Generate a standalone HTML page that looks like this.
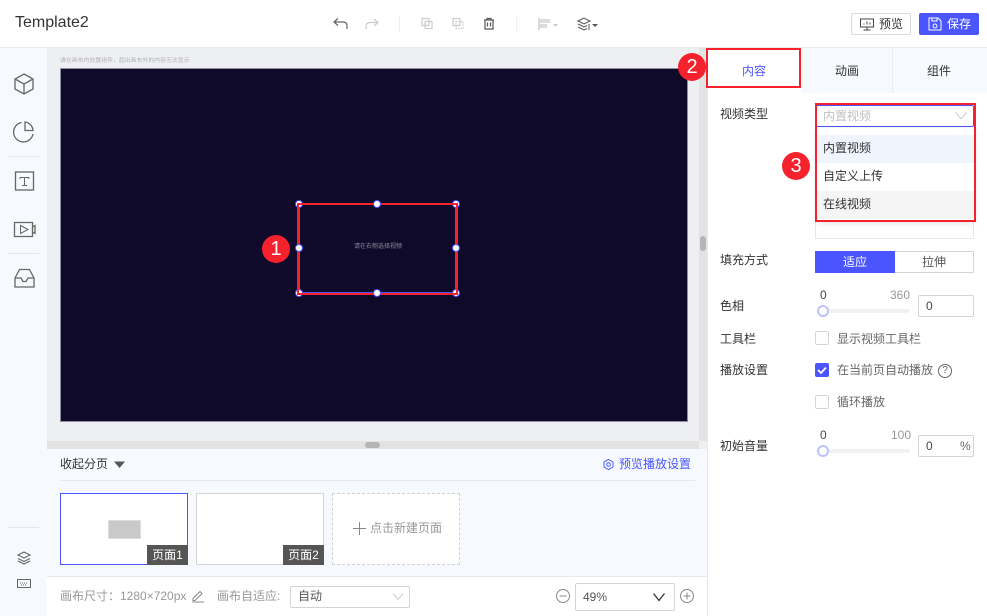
<!DOCTYPE html>
<html lang="zh"><head><meta charset="utf-8"><title>Template2</title>
<style>
*{box-sizing:border-box;margin:0;padding:0}
html,body{width:987px;height:616px;overflow:hidden;background:#fff}
body{position:relative;font-family:"Liberation Sans","Noto Sans CJK SC",sans-serif;font-size:12px;color:#333}
.a{position:absolute}
.t{position:absolute;white-space:nowrap;line-height:16px}
svg{position:absolute;overflow:visible;fill:none}
.h{position:absolute;width:8px;height:8px;border-radius:50%;background:#fff;border:1px solid #4a55ff}
.badge{position:absolute;width:28px;height:28px;border-radius:50%;background:#f5222d;color:#fff;font-size:20px;line-height:28px;text-align:center}
.red{position:absolute;border:2px solid #f5222d}
.cb{position:absolute;width:14px;height:14px;border:1px solid #d4d4d4;border-radius:2px;background:#fff}
.inp{position:absolute;border:1px solid #d4d4d4;border-radius:2px;background:#fff}
.knob{position:absolute;width:12px;height:12px;border-radius:50%;background:#fff;border:2px solid #bcc3fb}
.track{position:absolute;height:4px;background:#f2f2f2;border-radius:2px}
.g{color:#999}
</style></head><body>

<!-- top bar -->
<div class="a" style="left:0;top:47px;width:987px;height:1px;background:#e8e9ed"></div>
<div class="t" style="left:15px;top:13px;font-size:16px;line-height:20px;color:#333">Template2</div>

<svg style="left:0;top:0" width="987" height="47" stroke-width="1.2">
<path d="M338 18.500l-4 3.500 4 3.500M334 22h9c2.500 0 4 1.500 4 4v3" stroke="#666"/>
<path d="M374 19l4 3.500-4 3.500M378 22.500h-8c-2.500 0-4 1.500-4 4v2.500" stroke="#ccc"/>
<path d="M399.500 16v16" stroke="#eee"/>
<rect x="422" y="18.500" width="7" height="7" stroke="#ccc"/><rect x="425" y="21.500" width="7" height="7" stroke="#ccc"/>
<rect x="453" y="18.500" width="7" height="7" stroke="#ccc"/><rect x="456" y="21.500" width="7" height="7" stroke="#ccc" stroke-dasharray="1.500 1"/>
<path d="M484 20h10M487 20v-1.500h4v1.500M485 20v9h8v-9M487.500 22.500v4M490.500 22.500v4" stroke="#555"/>
<path d="M516.500 16v16" stroke="#eee"/>
<path d="M539 18v12" stroke="#ccc" stroke-width="1.500"/><rect x="540" y="19" width="10" height="4" fill="#ddd"/><rect x="540" y="24" width="7" height="4" fill="#ddd"/>
<path d="M553 24h5l-2.500 3z" fill="#ccc"/>
<path d="M578 21l6-3 6 3-6 3zM578 24l6 3 3-1.500M578 27l6 3 3-1.500M589 24v6" stroke="#555" stroke-width="1"/>
<path d="M592 24h6l-3 3z" fill="#555"/>
</svg>

<!-- preview / save -->
<div class="a" style="left:851px;top:13px;width:60px;height:22px;border:1px solid #d9d9d9;border-radius:2px;background:#fff"></div>
<svg style="left:860px;top:18px" width="16" height="14" stroke="#444"><rect x="0.500" y="1" width="13" height="8"/><path d="M7 9v2.500M3.500 12h7M4 6.500v-1M7 6.500v-3M10 6.500v-2"/></svg>
<div class="t" style="left:879px;top:16px;font-size:12px;color:#333">预览</div>
<div class="a" style="left:919px;top:13px;width:60px;height:22px;background:#4a55ff;border-radius:2px"></div>
<svg style="left:928px;top:17px" width="14" height="14" stroke="#fff"><path d="M1 1h9l3 3v9H1zM4 1v3h5V1"/><circle cx="7" cy="9" r="2"/></svg>
<div class="t" style="left:947px;top:16px;font-size:12px;color:#fff">保存</div>

<!-- left sidebar -->
<div class="a" style="left:0;top:48px;width:47px;height:568px;background:#f6f9fd"></div>
<div class="a" style="left:8px;top:156px;width:31px;height:1px;background:#e6e6e6"></div>
<div class="a" style="left:8px;top:253px;width:31px;height:1px;background:#e6e6e6"></div>
<div class="a" style="left:8px;top:527px;width:31px;height:1px;background:#e6e6e6"></div>
<svg style="left:0;top:0" width="47" height="616" stroke="#666" stroke-width="1.300">
<path d="M24 74l9 5v10l-9 5-9-5V79zM15 79l9 5 9-5M24 84v10"/>
<path d="M21.500 122.500a9.800 9.800 0 1 0 11.500 11.500M25 122a9 9 0 0 1 8 8.500h-8z"/>
<rect x="15.500" y="172" width="18" height="18"/>
<path d="M20 177.500h9M24.500 177.500v7.500M22 185.500h5M20 177.500v1.500M29 177.500v1.500" stroke-width="1"/>
<path d="M14.500 222.500h18v14h-18zM32.500 227l2.500-1.500v8l-2.500-1.500"/>
<path d="M20.500 225.500l7.500 4-7.500 4z" stroke-width="1"/>
<path d="M15 278v9h19v-9l-4.500-8.500h-10zM15 278h6l2 3.500h3l2-3.500h6"/>
<path d="M24 552l6 3-6 3-6-3zM18 558.500l6 3 6-3M18 561l6 3 6-3" stroke-width="1.100"/>
<rect x="17.500" y="579.500" width="13" height="8" stroke-width="1"/><path d="M20 583h8M21 585h6" stroke-dasharray="1 1" stroke-width="1"/>
</svg>

<!-- canvas area -->
<div class="a" style="left:47px;top:48px;width:652px;height:393px;background:#eeeff3"></div>
<div class="a" style="left:699px;top:48px;width:8px;height:393px;background:#e3e3e3"></div>
<div class="a" style="left:700px;top:236px;width:6px;height:15px;background:#b5b5b5;border-radius:3px"></div>
<div class="a" style="left:47px;top:441px;width:652px;height:8px;background:#e3e3e3"></div>
<div class="a" style="left:699px;top:441px;width:8px;height:8px;background:#eeeff3"></div>
<div class="a" style="left:365px;top:442px;width:15px;height:6px;background:#b5b5b5;border-radius:3px"></div>
<div class="t" style="left:60px;top:57px;font-size:5.900px;line-height:9px;color:#b5b5b5">请在画布内放置组件，超出画布外的内容无法显示</div>
<div class="a" style="left:60px;top:68px;width:628px;height:354px;background:#0f0a2a;border:1px solid #8e8e9e"></div>

<!-- selection -->
<div class="a" style="left:299px;top:204px;width:157px;height:89px;border:1.500px solid #4a55ff"></div>
<div class="h" style="left:295px;top:200px"></div>
<div class="h" style="left:452px;top:200px"></div>
<div class="h" style="left:295px;top:289px"></div>
<div class="h" style="left:452px;top:289px"></div>
<div class="red" style="left:297px;top:203px;width:161px;height:92px"></div>
<div class="h" style="left:373px;top:200px"></div>
<div class="h" style="left:295px;top:244px"></div>
<div class="h" style="left:452px;top:244px"></div>
<div class="h" style="left:373px;top:289px"></div>
<div class="t" style="left:354px;top:243px;font-size:6px;line-height:9px;color:#8d8d9b">请在右侧选择视频</div>
<div class="badge" style="left:262px;top:235px">1</div>

<!-- pages -->
<div class="a" style="left:47px;top:449px;width:660px;height:127px;background:#f6f9fd"></div>
<div class="t" style="left:60px;top:456px;color:#333">收起分页</div>
<svg style="left:114px;top:461px" width="12" height="8"><path d="M0 .500h11l-5.500 6.500z" fill="#555"/></svg>
<svg style="left:603px;top:459px" width="12" height="12" stroke="#4a55ff"><path d="M5.500.500l4.500 2.500v5l-4.500 2.500L1 8V3z"/><circle cx="5.500" cy="5.500" r="1.800"/></svg>
<div class="t" style="left:619px;top:456px;color:#4a55ff">预览播放设置</div>
<div class="a" style="left:60px;top:480px;width:635px;height:1px;background:#e6e8ec"></div>

<div class="a" style="left:60px;top:493px;width:128px;height:72px;background:#fff;border:1px solid #4a55ff"></div>
<div class="a" style="left:108px;top:520px;width:33px;height:19px;background:#c9c9c9;border:1px solid #ddd"></div>
<div class="a" style="left:147px;top:545px;width:41px;height:20px;background:#555;color:#fff;line-height:20px;text-align:center;font-size:12px">页面1</div>

<div class="a" style="left:196px;top:493px;width:128px;height:72px;background:#fff;border:1px solid #d4d4d4"></div>
<div class="a" style="left:283px;top:545px;width:41px;height:20px;background:#555;color:#fff;line-height:20px;text-align:center;font-size:12px">页面2</div>

<div class="a" style="left:332px;top:493px;width:128px;height:72px;background:#fff;border:1px dashed #d0d0d0"></div>
<svg style="left:353px;top:522px" width="13" height="13" stroke="#888"><path d="M6.500 0v13M0 6.500h13"/></svg>
<div class="t g" style="left:370px;top:520px">点击新建页面</div>

<!-- footer -->
<div class="a" style="left:47px;top:576px;width:660px;height:1px;background:#e6e8ec"></div>
<div class="t g" style="left:60px;top:588px">画布尺寸：1280×720px</div>
<svg style="left:191px;top:589px" width="14" height="14" stroke="#888"><path d="M2 9.500L9 2.500l2 2-7 7H2zM1 13h12"/></svg>
<div class="t g" style="left:217px;top:588px">画布自适应:</div>
<div class="inp" style="left:290px;top:586px;width:120px;height:22px"></div>
<div class="t" style="left:298px;top:588px;color:#555">自动</div>
<svg style="left:392px;top:593px" width="12" height="8" stroke="#ccc"><path d="M1 .500l5 6 5-6"/></svg>
<svg style="left:556px;top:589px" width="15" height="15" stroke="#888"><circle cx="7" cy="7" r="6.500"/><path d="M3.500 7h7"/></svg>
<div class="inp" style="left:575px;top:583px;width:100px;height:28px"></div>
<div class="t" style="left:583px;top:589px;color:#555">49%</div>
<svg style="left:653px;top:593px" width="13" height="9" stroke="#333" stroke-width="1.300"><path d="M.500 .500l5.500 7 5.500-7"/></svg>
<svg style="left:680px;top:589px" width="15" height="15" stroke="#888"><circle cx="7" cy="7" r="6.500"/><path d="M3.500 7h7M7 3.500v7"/></svg>

<!-- right panel -->
<div class="a" style="left:707px;top:48px;width:1px;height:568px;background:#e6e8ec"></div>
<div class="a" style="left:708px;top:48px;width:279px;height:45px;background:#f6f9fd"></div>
<div class="a" style="left:708px;top:48px;width:93px;height:40px;background:#fff"></div>
<div class="a" style="left:892px;top:48px;width:1px;height:45px;background:#e9ecf0"></div>
<div class="a" style="left:800px;top:88px;width:1px;height:5px;background:#e9ecf0"></div>
<div class="a" style="left:708px;top:88px;width:93px;height:5px;background:#fff"></div>
<div class="t" style="left:742px;top:63px;color:#4a55ff">内容</div>
<div class="t" style="left:835px;top:63px;color:#333">动画</div>
<div class="t" style="left:927px;top:63px;color:#333">组件</div>
<div class="red" style="left:706px;top:48px;width:95px;height:40px"></div>
<div class="badge" style="left:678px;top:53px">2</div>

<div class="t" style="left:720px;top:106px;color:#333">视频类型</div>
<div class="a" style="left:815px;top:105px;width:159px;height:22px;background:#fff;border:1px solid #4a55ff;border-radius:2px"></div>
<div class="t" style="left:823px;top:108px;color:#c0c0c0">内置视频</div>
<svg style="left:955px;top:112px" width="12" height="8" stroke="#ccc"><path d="M.500 .500l5.500 6.500 5.500-6.500"/></svg>
<div class="a" style="left:815px;top:219px;width:159px;height:20px;border:1px solid #e6e8ec;border-top:0"></div>
<div class="a" style="left:817px;top:128px;width:157px;height:93px;background:#fff;box-shadow:0 2px 8px rgba(0,0,0,.12)"></div>
<div class="a" style="left:817px;top:135px;width:157px;height:28px;background:#f0f4fd"></div>
<div class="a" style="left:817px;top:191px;width:157px;height:28px;background:#f5f5f5"></div>
<div class="t" style="left:823px;top:140px;color:#333">内置视频</div>
<div class="t" style="left:823px;top:168px;color:#333">自定义上传</div>
<div class="t" style="left:823px;top:196px;color:#333">在线视频</div>
<div class="red" style="left:815px;top:103px;width:161px;height:119px"></div>
<div class="badge" style="left:782px;top:152px">3</div>

<div class="t" style="left:720px;top:252px">填充方式</div>
<div class="a" style="left:815px;top:251px;width:80px;height:22px;background:#4a55ff;color:#fff;text-align:center;line-height:22px">适应</div>
<div class="a" style="left:895px;top:251px;width:79px;height:22px;border:1px solid #d4d4d4;border-left:0;background:#fff;text-align:center;line-height:20px;color:#555">拉伸</div>

<div class="t" style="left:720px;top:298px">色相</div>
<div class="t" style="left:820px;top:287px;color:#444">0</div>
<div class="t g" style="left:890px;top:287px">360</div>
<div class="track" style="left:819px;top:309px;width:91px"></div>
<div class="knob" style="left:817px;top:305px"></div>
<div class="inp" style="left:918px;top:295px;width:56px;height:22px"></div>
<div class="t" style="left:926px;top:298px;color:#444">0</div>

<div class="t" style="left:720px;top:331px">工具栏</div>
<div class="cb" style="left:815px;top:331px"></div>
<div class="t" style="left:837px;top:331px;color:#666">显示视频工具栏</div>

<div class="t" style="left:720px;top:362px">播放设置</div>
<div class="a" style="left:815px;top:363px;width:14px;height:14px;background:#4a55ff;border-radius:2px"></div>
<svg style="left:815px;top:363px" width="14" height="14" stroke="#fff" stroke-width="1.800"><path d="M3 7l3 3 5-5.500"/></svg>
<div class="t" style="left:837px;top:362px;color:#666">在当前页自动播放</div>
<div class="a" style="left:938px;top:364px;width:14px;height:14px;border:1px solid #666;border-radius:50%;text-align:center;font-size:10px;line-height:12px;color:#666">?</div>

<div class="cb" style="left:815px;top:395px"></div>
<div class="t" style="left:837px;top:394px;color:#666">循环播放</div>

<div class="t" style="left:720px;top:438px">初始音量</div>
<div class="t" style="left:820px;top:427px;color:#444">0</div>
<div class="t g" style="left:891px;top:427px">100</div>
<div class="track" style="left:819px;top:449px;width:91px"></div>
<div class="knob" style="left:817px;top:445px"></div>
<div class="inp" style="left:918px;top:435px;width:56px;height:22px"></div>
<div class="t" style="left:926px;top:438px;color:#444">0</div>
<div class="t" style="left:960px;top:438px;color:#666">%</div>

</body></html>
